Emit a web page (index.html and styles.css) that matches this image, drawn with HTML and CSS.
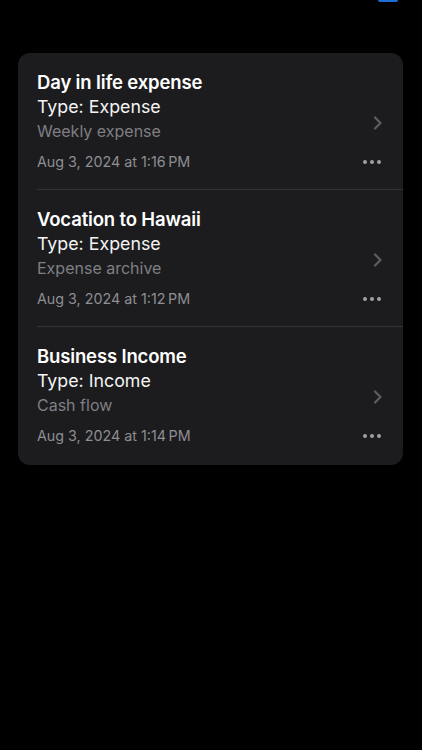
FILE: index.html
```html
<!DOCTYPE html>
<html lang="en">
<head>
<meta charset="utf-8">
<title>Reports</title>
<link rel="stylesheet" href="styles.css">
</head>
<body>
<header class="top">
  <span class="top-btn"></span>
</header>
<main class="card">
  <section class="row">
    <div class="title">Day in life expense</div>
    <div class="type">Type: Expense</div>
    <div class="sub">Weekly expense</div>
    <div class="date-line"><span class="date">Aug 3, 2024 at 1:16&#8201;PM</span><span class="dots"><i></i><i></i><i></i></span></div>
    <svg class="chev" width="10" height="16" viewBox="0 0 10 16"><path d="M2 2.5 L7.5 8 L2 13.5" fill="none" stroke="currentColor" stroke-width="2.2" stroke-linecap="round" stroke-linejoin="round"/></svg>
  </section>
  <section class="row">
    <div class="title">Vocation to Hawaii</div>
    <div class="type">Type: Expense</div>
    <div class="sub">Expense archive</div>
    <div class="date-line"><span class="date">Aug 3, 2024 at 1:12&#8201;PM</span><span class="dots"><i></i><i></i><i></i></span></div>
    <svg class="chev" width="10" height="16" viewBox="0 0 10 16"><path d="M2 2.5 L7.5 8 L2 13.5" fill="none" stroke="currentColor" stroke-width="2.2" stroke-linecap="round" stroke-linejoin="round"/></svg>
  </section>
  <section class="row">
    <div class="title">Business Income</div>
    <div class="type">Type: Income</div>
    <div class="sub">Cash flow</div>
    <div class="date-line"><span class="date">Aug 3, 2024 at 1:14&#8201;PM</span><span class="dots"><i></i><i></i><i></i></span></div>
    <svg class="chev" width="10" height="16" viewBox="0 0 10 16"><path d="M2 2.5 L7.5 8 L2 13.5" fill="none" stroke="currentColor" stroke-width="2.2" stroke-linecap="round" stroke-linejoin="round"/></svg>
  </section>
</main>
</body>
</html>
```
FILE: styles.css
```css
* { box-sizing: border-box; }
html, body { margin: 0; padding: 0; background: #000; }
body {
  font-family: Inter, "Noto Sans", "Liberation Sans", sans-serif;
  color: #fff;
  width: 422px;
  height: 750px;
  overflow: hidden;
}
.top {
  height: 53px;
  display: flex;
  justify-content: flex-end;
  align-items: flex-start;
  padding-right: 24px;
}
.top-btn {
  display: block;
  width: 20px;
  height: 2px;
  background: #1f6fd6;
  border-radius: 0 0 3px 3px;
}
.card {
  margin: 0 19px 0 18px;
  background: #1c1c1e;
  border-radius: 12px;
  padding-left: 19px;
}
.row {
  display: grid;
  grid-template-columns: 1fr 12px;
  grid-template-rows: 24px 26px 23px 30px;
  padding: 17px 19px 16px 0;
  border-bottom: 1px solid #333336;
}
.row:last-child { border-bottom: none; padding-bottom: 18px; }
.title {
  grid-column: 1;
  grid-row: 1;
  font-size: 18.5px;
  font-weight: 600;
  line-height: 24px;
  letter-spacing: -0.15px;
}
.type {
  grid-column: 1;
  grid-row: 2;
  font-size: 17.8px;
  line-height: 26px;
  color: #f4f4f5;
}
.sub {
  grid-column: 1;
  grid-row: 3;
  font-size: 16px;
  line-height: 23px;
  color: #7f7f84;
}
.date-line {
  grid-column: 1 / 3;
  grid-row: 4;
  display: flex;
  align-items: flex-end;
  justify-content: space-between;
  height: 30px;
}
.date {
  font-size: 14.3px;
  line-height: 22px;
  color: #8e8e93;
}
.dots {
  display: flex;
  gap: 3px;
  height: 22px;
  align-items: center;
  margin-right: 3px;
}
.dots i {
  display: block;
  width: 4px;
  height: 4px;
  border-radius: 50%;
  background: #a0a0a5;
}
.chev {
  grid-column: 2;
  grid-row: 1 / 5;
  align-self: center;
  justify-self: center;
  color: #5c5c61;
  margin-top: 2px;
}
```
